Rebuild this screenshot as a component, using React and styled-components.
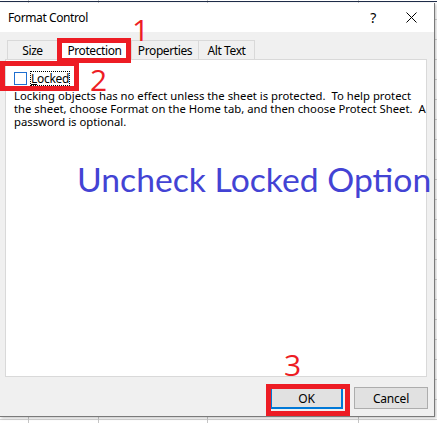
import React from "react";
import styled, { createGlobalStyle } from "styled-components";

const Global = createGlobalStyle`
  html, body { margin: 0; padding: 0; background: #ffffff; }
  body { font-family: "Noto Sans", "Open Sans", sans-serif; }
  * { box-sizing: border-box; }
`;

const RED = "#ed1c24";

const Page = styled.div`
  width: 437px;
  height: 423px;
  overflow: hidden;
  padding-top: 3px;
  background:
    linear-gradient(#1f2d4a, #1f2d4a) 0 1px / 100% 1px no-repeat,
    linear-gradient(#c6c6c6, #c6c6c6) 28px 0 / 1px 100% no-repeat,
    linear-gradient(#c6c6c6, #c6c6c6) 98px 0 / 1px 100% no-repeat,
    linear-gradient(#c6c6c6, #c6c6c6) 207px 0 / 1px 100% no-repeat,
    linear-gradient(#c6c6c6, #c6c6c6) 358px 0 / 1px 100% no-repeat,
    repeating-linear-gradient(#ffffff 0 19px, #d4d4d4 19px 20px) 0 0 / 100% 100%,
    #ffffff;
`;

const Dialog = styled.div`
  width: 435px;
  height: 414px;
  display: flex;
  flex-direction: column;
  background: #f0f0f0;
  border-right: 1px solid #7a7a7a;
  border-bottom: 1px solid #7a7a7a;
  box-shadow: 1px 1px 3px rgba(0, 0, 0, 0.25);
`;

const TitleBar = styled.div`
  height: 29px;
  flex: none;
  display: flex;
  align-items: center;
  background: #ffffff;
  padding-left: 8px;
  font-size: 12px;
  letter-spacing: -0.4px;
  color: #000;
`;

const Title = styled.span`
  flex: 1;
  padding-bottom: 1px;
`;

const TitleButton = styled.span`
  width: ${(p) => p.$w}px;
  height: 29px;
  display: flex;
  align-items: center;
  justify-content: center;
  font-size: 14px;
  color: #000;
`;

const Body = styled.div`
  flex: 1;
  display: flex;
  flex-direction: column;
  padding: 8px 0 7px 5px;
`;

const TabRow = styled.div`
  display: flex;
  align-items: flex-end;
  height: 19px;
  margin-left: 2px;
  position: relative;
  z-index: 2;
`;

const Tab = styled.div`
  position: relative;
  width: ${(p) => p.$w}px;
  height: ${(p) => (p.$active ? 20 : 19)}px;
  margin-bottom: ${(p) => (p.$active ? -1 : 0)}px;
  display: flex;
  align-items: center;
  justify-content: center;
  font-size: 12px;
  letter-spacing: -0.4px;
  color: #000;
  background: ${(p) => (p.$active ? "#ffffff" : "#f0f0f0")};
  border: 1px solid #d9d9d9;
  border-bottom: none;
  & + & { border-left: ${(p) => (p.$active ? "1px solid #d9d9d9" : "none")}; }
`;

const Highlight = styled.div`
  position: absolute;
  left: ${(p) => p.$l}px;
  top: ${(p) => p.$t}px;
  width: ${(p) => p.$w}px;
  height: ${(p) => p.$h}px;
  border: ${(p) => p.$b || 5}px solid ${RED};
  pointer-events: none;
  z-index: 3;
`;

const Num = styled.span`
  position: absolute;
  left: ${(p) => p.$l}px;
  top: ${(p) => p.$t}px;
  font-family: "Open Sans", "Noto Sans", sans-serif;
  font-size: 30px;
  line-height: 22px;
  height: 22px;
  color: ${RED};
  z-index: 4;
`;

const Panel = styled.div`
  width: 422px;
  height: 318px;
  flex: none;
  background: #ffffff;
  border: 1px solid #d9d9d9;
  padding: 11px 8px 0 8px;
  display: flex;
  flex-direction: column;
`;

const LockedRow = styled.div`
  position: relative;
  display: flex;
  align-items: center;
  height: 14px;
`;

const CheckBox = styled.span`
  width: 13px;
  height: 13px;
  border: 1px solid #1e6fd0;
  background: #fff;
  flex: none;
`;

const FocusLabel = styled.span`
  margin-left: 3px;
  padding: 0 1px;
  height: 15px;
  display: flex;
  align-items: center;
  font-size: 12px;
  letter-spacing: -0.3px;
  color: #000;
  outline: 1px dotted #000;
  outline-offset: -1px;
  & u { text-decoration-thickness: 1px; text-underline-offset: 1px; }
`;

const Desc = styled.p`
  margin: 4px 0 0 0;
  font-size: 11.3px;
  line-height: 13px;
  color: #000;
  white-space: pre;
`;

const Heading = styled.div`
  margin: 31px 0 0 63px;
  font-family: Lato, "Open Sans", sans-serif;
  font-size: 33.7px;
  line-height: 40px;
  color: #4343d4;
  white-space: nowrap;
`;

const ButtonRow = styled.div`
  display: flex;
  justify-content: flex-end;
  gap: 11px;
  margin-top: 10px;
  padding-right: 6px;
`;

const Button = styled.div`
  position: relative;
  width: ${(p) => p.$w}px;
  height: 22px;
  display: flex;
  align-items: center;
  justify-content: center;
  font-size: 12px;
  letter-spacing: -0.2px;
  color: #000;
  background: #e1e1e1;
  border: ${(p) => (p.$default ? "2px solid #0078d7" : "1px solid #adadad")};
`;

export default function App() {
  return (
    <>
      <Global />
      <Page>
        <Dialog>
          <TitleBar>
            <Title>Format Control</Title>
            <TitleButton $w={30}>?</TitleButton>
            <TitleButton $w={46}>
              <svg width="11" height="11" viewBox="0 0 11 11">
                <path d="M0.5 0.5 L10.5 10.5 M10.5 0.5 L0.5 10.5" stroke="#000" strokeWidth="1" fill="none" />
              </svg>
            </TitleButton>
          </TitleBar>
          <Body>
            <TabRow>
              <Tab $w={51}>Size</Tab>
              <Tab $w={74} $active>
                Protection
                <Highlight $l={-1} $t={-3} $w={74} $h={25} />
                <Num $l={74} $t={-22}>1</Num>
              </Tab>
              <Tab $w={67}>Properties</Tab>
              <Tab $w={56}>Alt Text</Tab>
            </TabRow>
            <Panel>
              <LockedRow>
                <CheckBox />
                <FocusLabel>
                  <span><u>L</u>ocked</span>
                </FocusLabel>
                <Highlight $l={-14} $t={-10} $w={79} $h={30} />
                <Num $l={76} $t={-2}>2</Num>
              </LockedRow>
              <Desc>
                {"Locking objects has no effect unless the sheet is protected.  To help protect\nthe sheet, choose Format on the Home tab, and then choose Protect Sheet.  A\npassword is optional."}
              </Desc>
              <Heading>Uncheck Locked Option</Heading>
            </Panel>
            <ButtonRow>
              <Button $w={73} $default>
                OK
                <Highlight $l={-6} $t={-5} $w={84} $h={32} />
                <Num $l={12} $t={-35}>3</Num>
              </Button>
              <Button $w={74}>Cancel</Button>
            </ButtonRow>
          </Body>
        </Dialog>
      </Page>
    </>
  );
}
